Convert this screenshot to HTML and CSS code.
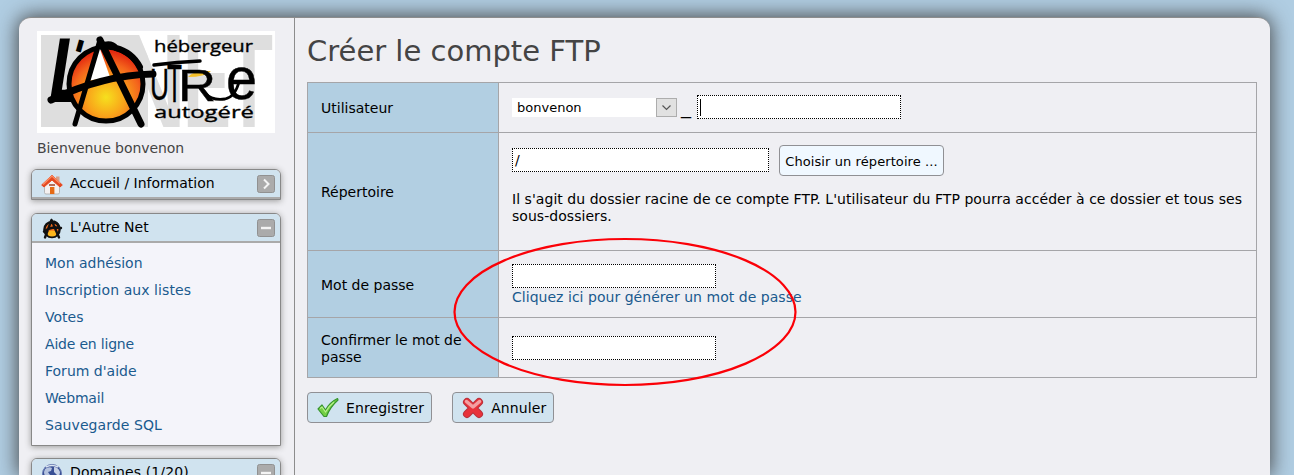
FILE: index.html
```html
<!DOCTYPE html>
<html lang="fr">
<head>
<meta charset="utf-8">
<title>Créer le compte FTP</title>
<link rel="stylesheet" href="styles.css">
</head>
<body>
<div class="page">
  <aside class="sidebar">
    <svg class="logo" viewBox="0 0 238 102" width="238" height="102">
      <defs>
        <radialGradient id="sun" cx=".5" cy=".68" r=".62">
          <stop offset="0" stop-color="#f6e01e"/><stop offset=".4" stop-color="#f9a51a"/><stop offset=".75" stop-color="#f4641c"/><stop offset="1" stop-color="#e32a10"/>
        </radialGradient>
      </defs>
      <rect width="238" height="102" fill="#fff"/>
      <path d="M4 4H101L111 26V96H4Z" fill="#dedede"/>
      <g class="logo-back">
        <text x="80" y="96" textLength="69" lengthAdjust="spacingAndGlyphs">N</text>
        <text x="146" y="96" textLength="48" lengthAdjust="spacingAndGlyphs">E</text>
        <text x="188" y="96" textLength="48" lengthAdjust="spacingAndGlyphs">T</text>
      </g>
      <text class="logo-brush" transform="translate(8 71) skewX(-9)" font-size="87" textLength="34" lengthAdjust="spacingAndGlyphs">L</text>
      <text class="logo-brush" x="37" y="41" font-size="44" transform="rotate(16 43 12)">'</text>
      <circle cx="69" cy="53" r="37" fill="url(#sun)" stroke="#000" stroke-width="5"/>
      <path d="M62 15L50 50L73 46Z" fill="#fff"/>
      <g fill="none" stroke="#000" stroke-linecap="round" stroke-linejoin="round">
        <path d="M63 9L38 93" stroke-width="5"/>
        <path d="M63 9L104 93" stroke-width="7"/>
        <path d="M64 15Q74 11 79 17Q95 21 103 36" stroke-width="6"/>
        <path d="M14 69Q66 44 116 43" stroke-width="7"/>
      </g>
      <path d="M151 46Q156 39 174 40Q168 46 151 46Z" fill="#f3bf2a"/>
      <g class="logo-hand">
        <text x="113" y="69" font-size="44" textLength="19" lengthAdjust="spacingAndGlyphs">U</text>
        <text x="130" y="71" font-size="54" textLength="15" lengthAdjust="spacingAndGlyphs">T</text>
        <text x="141" y="70" font-size="45" textLength="38" lengthAdjust="spacingAndGlyphs">R</text>
        <text x="189" y="68" font-size="60" textLength="31" lengthAdjust="spacingAndGlyphs">e</text>
      </g>
      <path d="M117 34Q140 31 163 30" fill="none" stroke="#000" stroke-width="3.500" stroke-linecap="round"/>
      <path d="M168 62Q175 70 188 68Q198 66 202 51" fill="none" stroke="#000" stroke-width="2.800"/>
      <g class="logo-words">
        <text x="117" y="21" textLength="99" lengthAdjust="spacingAndGlyphs">hébergeur</text>
        <text x="117" y="87" textLength="100" lengthAdjust="spacingAndGlyphs">autogéré</text>
      </g>
    </svg>
    <p class="welcome">Bienvenue bonvenon</p>

    <section class="panel first">
      <h2 class="panel-head">
        <svg class="panel-icon" width="22" height="22" viewBox="0 0 22 22">
          <path d="M3.500 11L11 4L18.500 11V18.500Q18.500 20 17 20H5Q3.500 20 3.500 18.500Z" fill="#f4f1f0" stroke="#aaa" stroke-width=".8"/>
          <path d="M15 2.500H18.500V8L15 5Z" fill="#d8a089"/>
          <path d="M11 1.200L21.300 11L19 13L11 6L3 13L.7 11Z" fill="#e5481f" stroke="#e5481f" stroke-linejoin="round"/>
          <path d="M2 10.500L11 2L19 9.500" fill="none" stroke="#f98b63" stroke-width="1.500"/>
          <rect x="9" y="13" width="4.400" height="7" fill="#e56b16"/>
          <rect x="8" y="10" width="6" height="2" fill="#b66d57"/>
        </svg>
        <span>Accueil / Information</span>
        <svg class="toggle" width="18" height="18" viewBox="0 0 18 18"><rect x=".5" y=".5" width="17" height="17" rx="2" fill="#ababab" stroke="#919191"/><path d="M7 4.500L11.500 9L7 13.500" fill="none" stroke="#f4f4f4" stroke-width="2"/></svg>
      </h2>
    </section>

    <section class="panel">
      <h2 class="panel-head">
        <svg class="panel-icon" width="22" height="22" viewBox="0 0 22 22">
          <circle cx="11" cy="11.500" r="7.600" fill="#f26a1b" stroke="#111" stroke-width="2.400"/>
          <ellipse cx="11" cy="15.500" rx="4.500" ry="3" fill="#fbb51c"/>
          <path d="M10.500 2L4 19.500M10.500 2L18 19.500M3 13.500Q10 8 20 10M10 3Q17 4 18 9" fill="none" stroke="#111" stroke-width="2.400" stroke-linecap="round"/>
        </svg>
        <span>L'Autre Net</span>
        <svg class="toggle" width="18" height="18" viewBox="0 0 18 18"><rect x=".5" y=".5" width="17" height="17" rx="2" fill="#ababab" stroke="#919191"/><path d="M4 9H14" stroke="#f4f4f4" stroke-width="2.400"/></svg>
      </h2>
      <ul class="menu">
        <li><a>Mon adhésion</a></li>
        <li><a class="looser">Inscription aux listes</a></li>
        <li><a>Votes</a></li>
        <li><a class="tighter">Aide en ligne</a></li>
        <li><a>Forum d'aide</a></li>
        <li><a class="tighter">Webmail</a></li>
        <li><a class="looser">Sauvegarde SQL</a></li>
      </ul>
    </section>

    <section class="panel">
      <h2 class="panel-head">
        <svg class="panel-icon" width="22" height="22" viewBox="0 0 22 22">
          <circle cx="11" cy="11" r="9.600" fill="#395095" stroke="#6b7db4"/>
          <path d="M4 6Q8 3 11 5L10 8L7 9L9 12L7 16Q3 13 3 9Z" fill="#b4c2de"/>
          <path d="M13 4Q17 4 19 9L18 14L15 11L13 9Z" fill="#c6d1e6"/>
          <path d="M5 4Q11 1 17 4" fill="none" stroke="#dce5f2" stroke-width="1.500"/>
        </svg>
        <span class="count">Domaines (1/20)</span>
        <svg class="toggle" width="18" height="18" viewBox="0 0 18 18"><rect x=".5" y=".5" width="17" height="17" rx="2" fill="#ababab" stroke="#919191"/><path d="M4 9H14" stroke="#f4f4f4" stroke-width="2.400"/></svg>
      </h2>
    </section>
  </aside>

  <main class="content">
    <h1 class="title">Créer le compte FTP</h1>
    <div class="form">
      <div class="row row-user">
        <div class="label">Utilisateur</div>
        <div class="cell user-cell">
          <div class="select"><span>bonvenon</span>
            <svg width="21" height="19" viewBox="0 0 21 19"><rect x=".5" y=".5" width="20" height="18" fill="#e1e1e1" stroke="#adadad"/><path d="M6.500 7.500L10.500 11.500L14.500 7.500" fill="none" stroke="#555" stroke-width="1.200"/></svg>
          </div>
          <span class="underscore">_</span>
          <div class="input"><i class="caret"></i></div>
        </div>
      </div>
      <div class="row row-dir">
        <div class="label">Répertoire</div>
        <div class="cell dir-cell">
          <div class="dir-line"><div class="input wide">/</div><button class="choose">Choisir un répertoire ...</button></div>
          <p class="hint"><span>Il s'agit du dossier racine de ce compte FTP. L'utilisateur du FTP pourra accéder à ce dossier et tous ses</span><br><span>sous-dossiers.</span></p>
        </div>
      </div>
      <div class="row row-pass">
        <div class="label">Mot de passe</div>
        <div class="cell pass-cell"><div class="input"></div><a class="generate">Cliquez ici pour générer un mot de passe</a></div>
      </div>
      <div class="row row-confirm">
        <div class="label">Confirmer le mot de<br>passe</div>
        <div class="cell confirm-cell"><div class="input"></div></div>
      </div>
      <svg class="highlight" width="344" height="150" viewBox="0 0 344 150"><ellipse cx="172" cy="75" rx="170.500" ry="73" fill="none" stroke="#fb0007" stroke-width="2.200"/></svg>
    </div>
    <div class="actions">
      <button class="action">
        <svg width="22" height="22" viewBox="0 0 22 22"><path d="M1 12L5 8L8.500 13Q13 5 20.500 1.500L21 3Q13 10 9.500 19.500L7 19.500Z" fill="#74d044" stroke="#36942d" stroke-width="1.200" stroke-linejoin="round"/><path d="M3 11.500L5 10L8.500 15Q12 9 17 5" fill="none" stroke="#b9f08c" stroke-width="1.200"/></svg>
        <span>Enregistrer</span>
      </button>
      <button class="action">
        <svg width="22" height="22" viewBox="0 0 22 22"><g stroke-linecap="round" stroke-linejoin="round"><path d="M5 5L17 17M17 5L5 17" stroke="#b8323c" stroke-width="8"/><path d="M5 5L17 17M17 5L5 17" stroke="#e8323a" stroke-width="6"/><path d="M4.500 4.500L11 10L17.500 4.500" fill="none" stroke="#f3a0a2" stroke-width="3.500"/></g></svg>
        <span>Annuler</span>
      </button>
    </div>
  </main>
</div>
</body>
</html>
```
FILE: styles.css
```css
* { box-sizing: border-box; }
html { height: 100%; overflow: hidden; }
body { margin: 0; padding: 17px 24px 0 19px; height: 475px; overflow: hidden; background: #b0cde2; font: 14px/17px Verdana, "DejaVu Sans", sans-serif; color: #000; }
.page { display: flex; height: 458px; background: #efeff3; border-top: 1px solid #8c8c8c; border-radius: 12px 12px 0 0; box-shadow: 0 0 20px 1px #444; }
.sidebar { width: 276px; height: 457px; overflow: hidden; padding: 13px 13px 0 12px; border-right: 1px solid #8c8c8c; }
.logo { display: block; margin-left: 6px; }
.logo-back { font: bold 133px "Liberation Sans", sans-serif; fill: #dedede; }
.logo-brush { font-family: "DejaVu Sans", sans-serif; font-weight: bold; }
.logo-hand { font-family: "Liberation Sans", sans-serif; stroke: #000; stroke-width: .4px; }
.logo-words { font: 17px "Open Sans", sans-serif; stroke: #000; stroke-width: .35px; }
.welcome { margin: 7px 0 12px 6px; color: #444; letter-spacing: -.06px; }
.panel { margin-bottom: 12px; border: 1px solid #888; border-radius: 6px 6px 0 0; background: #f4f4fa; box-shadow: 0 1px 6px #999; }
.panel.first { margin-bottom: 13px; }
.panel-head { display: flex; align-items: center; height: 29px; margin: 0; padding: 0 5px 2px 9px; background: #d0e3ef; border-bottom: 2px solid #aaa; border-radius: 5px 5px 0 0; font-size: 14px; font-weight: normal; }
.panel-head span { position: relative; top: 1px; }
.count { letter-spacing: .12px; }
.panel-icon { margin-right: 7px; position: relative; top: 2px; }
.toggle { margin-left: auto; position: relative; top: 1px; }
.menu { list-style: none; margin: 0; padding: 7px 13px 6px; }
.menu li { height: 27px; line-height: 27px; }
.menu a, .generate { color: #1a5a8e; }
.menu .looser { letter-spacing: .07px; }
.menu .tighter { letter-spacing: -.2px; }
.content { width: 975px; padding: 16px 13px 0 12px; }
.title { margin: 0; height: 48px; font-size: 29px; line-height: 35px; font-weight: normal; color: #444; white-space: nowrap; }
.form { position: relative; border: 1px solid #a5a5a8; }
.row { display: flex; border-bottom: 1px solid #a5a5a8; }
.row-user { height: 50px; }
.row-dir { height: 118px; }
.row-pass { height: 67px; }
.row-confirm { height: 59px; border-bottom: 0; }
.label { display: flex; align-items: center; width: 191px; padding: 2px 0 0 13px; background: #b2cfe2; border-right: 1px solid #a5a5a8; white-space: nowrap; }
.cell { flex: 1; padding-left: 13px; white-space: nowrap; }
.input { width: 204px; height: 24px; border: 1px dotted #000; background: #fff; padding: 3px 2px; line-height: 17px; }
.input.wide { width: 257px; }
.caret { display: block; width: 1px; height: 17px; background: #000; }
.user-cell { display: flex; align-items: center; padding-bottom: 1px; }
.select { display: flex; justify-content: space-between; align-items: center; width: 165px; height: 19px; padding-left: 5px; background: #fff; font-size: 13px; }
.underscore { width: 20px; padding-left: 4px; font-size: 20px; }
.dir-line { display: flex; align-items: center; gap: 10px; padding-top: 12px; }
.dir-line .input { margin-bottom: 1px; }
.choose { width: 165px; height: 31px; padding: 1px 0 0; border: 1px solid #909094; border-radius: 4px; background: #f0f8ff; font: 13px Verdana, "DejaVu Sans", sans-serif; letter-spacing: .09px; color: #000; }
.hint { margin: 15px 0 0; letter-spacing: .044px; }
.pass-cell { padding-top: 13px; }
.generate { display: block; margin-top: 1px; letter-spacing: .03px; }
.confirm-cell { display: flex; align-items: center; }
.highlight { position: absolute; left: 145px; top: 154px; }
.actions { display: flex; gap: 20px; margin-top: 14px; }
.action { display: flex; align-items: center; gap: 7px; height: 31px; padding: 0 7px 0 9px; border: 1px solid #909094; border-radius: 4px; background: #d0e3ef; font: 14px Verdana, "DejaVu Sans", sans-serif; letter-spacing: .09px; color: #000; }
```
